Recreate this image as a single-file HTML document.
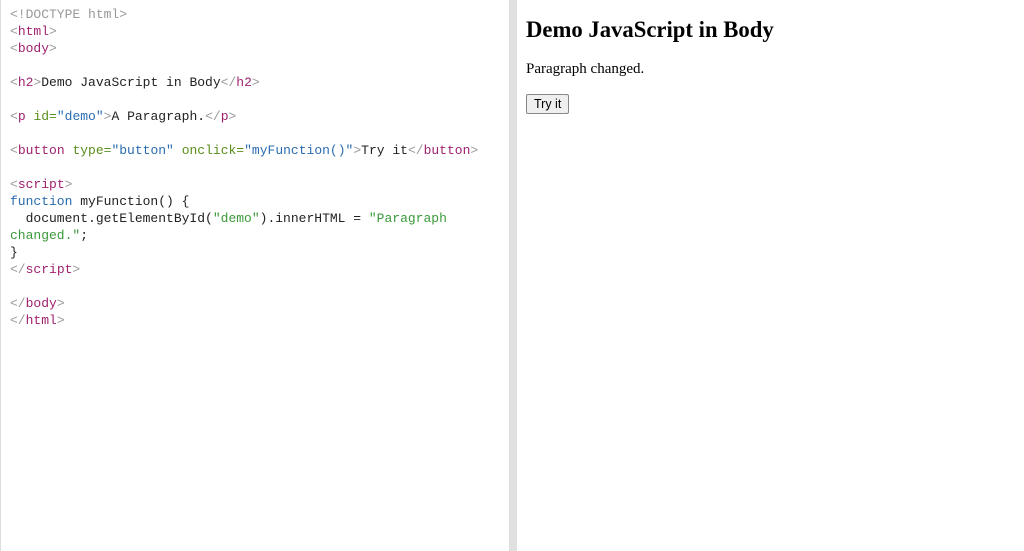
<!DOCTYPE html>
<html><head><style>
html,body{margin:0;padding:0;width:1024px;height:551px;overflow:hidden;background:#fff}
#left{position:absolute;left:0;top:0;width:508px;height:551px;border-left:1px solid #ddd;box-sizing:border-box}
#div{position:absolute;left:509px;top:0;width:8px;height:551px;background:#e0e0e0}
pre{margin:0;position:absolute;left:9px;top:6px;font-family:"Liberation Mono",monospace;font-size:13px;line-height:17px;color:#222}
.b{color:#999}.t{color:#a0226e}.a{color:#5a8f1c}.v{color:#2a6cb0}.k{color:#2a6cb0}.s{color:#3a9a3a}
#right{position:absolute;left:526px;top:0;font-family:"Liberation Serif",serif;color:#000}
h2{margin:0;position:absolute;top:17px;left:0;font-size:22.7px;white-space:nowrap;font-weight:bold}
p{margin:0;position:absolute;top:61px;left:0;font-size:15px;white-space:nowrap}
button{position:absolute;top:94px;left:0;font-family:"Liberation Sans",sans-serif;font-size:12.5px;padding:1px 7px;border:1px solid #888;background:#efefef;border-radius:2px;height:20px;white-space:nowrap}
</style></head><body>
<div id="left"><pre><span class="b">&lt;!DOCTYPE html&gt;</span>
<span class="b">&lt;</span><span class="t">html</span><span class="b">&gt;</span>
<span class="b">&lt;</span><span class="t">body</span><span class="b">&gt;</span>

<span class="b">&lt;</span><span class="t">h2</span><span class="b">&gt;</span>Demo JavaScript in Body<span class="b">&lt;/</span><span class="t">h2</span><span class="b">&gt;</span>

<span class="b">&lt;</span><span class="t">p</span> <span class="a">id=</span><span class="v">"demo"</span><span class="b">&gt;</span>A Paragraph.<span class="b">&lt;/</span><span class="t">p</span><span class="b">&gt;</span>

<span class="b">&lt;</span><span class="t">button</span> <span class="a">type=</span><span class="v">"button"</span> <span class="a">onclick=</span><span class="v">"myFunction()"</span><span class="b">&gt;</span>Try it<span class="b">&lt;/</span><span class="t">button</span><span class="b">&gt;</span>

<span class="b">&lt;</span><span class="t">script</span><span class="b">&gt;</span>
<span class="k">function</span> myFunction() {
  document.getElementById(<span class="s">"demo"</span>).innerHTML = <span class="s">"Paragraph
changed."</span>;
}
<span class="b">&lt;/</span><span class="t">script</span><span class="b">&gt;</span>

<span class="b">&lt;/</span><span class="t">body</span><span class="b">&gt;</span>
<span class="b">&lt;/</span><span class="t">html</span><span class="b">&gt;</span></pre></div>
<div id="div"></div>
<div id="right">
<h2>Demo JavaScript in Body</h2>
<p>Paragraph changed.</p>
<button type="button">Try it</button>
</div>
</body></html>
